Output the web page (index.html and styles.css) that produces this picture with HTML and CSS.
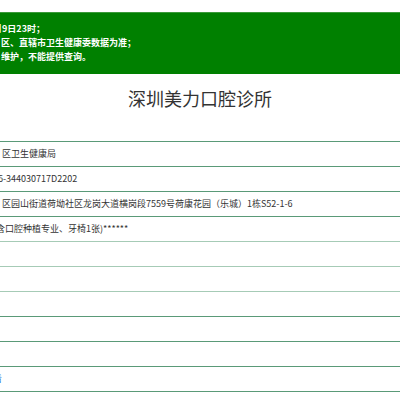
FILE: index.html
```html
<!DOCTYPE html>
<html lang="zh-CN">
<head>
<meta charset="utf-8">
<title>深圳美力口腔诊所</title>
<link rel="stylesheet" href="styles.css">
</head>
<body>
<div class="notice">
  <div class="line"><span class="cut1">月</span>9日23时；</div>
  <div class="line">区、直辖市卫生健康委数据为准；</div>
  <div class="line">维护，不能提供查询。</div>
</div>
<h1 class="title">深圳美力口腔诊所</h1>
<div class="table">
  <div class="row"><span class="val">区卫生健康局</span></div>
  <div class="row"><span class="val"><span class="cut2">6</span>-344030717D2202</span></div>
  <div class="row"><span class="val">区园山街道荷坳社区龙岗大道横岗段7559号荷康花园（乐城）1栋S52-1-6</span></div>
  <div class="row"><span class="val"><span class="cut3">含</span>口腔种植专业、牙椅1张)******</span></div>
  <div class="row light"></div>
  <div class="row light"></div>
  <div class="row light"></div>
  <div class="row"></div>
  <div class="row"></div>
  <div class="row"><span class="val"><span class="link">看</span></span></div>
  <div class="row"></div>
</div>
</body>
</html>
```
FILE: styles.css
```css
html, body {
  margin: 0;
  padding: 0;
  background: #fff;
  overflow: hidden;
}
body {
  font-family: "Noto Sans CJK SC", "Noto Sans", sans-serif;
  color: #333;
}
.notice {
  margin-top: 12px;
  background: #008000;
  border-top: 1px solid #3a9a3a;
  color: #fff;
  font-weight: bold;
  font-size: 9px;
  line-height: 14px;
  padding: 9px 0 10px 1px;
}
.line {
  white-space: nowrap;
}
.cut1 {
  display: inline-block;
  margin-left: -8px;
}
.title {
  margin: 9px 0 28px 0;
  font-size: 18px;
  font-weight: normal;
  line-height: 30px;
  text-align: center;
  color: #333;
}
.row {
  border-top: 1px solid #5a9a78;
  height: 24px;
  line-height: 24px;
  font-size: 9px;
  white-space: nowrap;
  overflow: hidden;
}
.row.light {
  border-top-color: #a6cbb6;
}
.val {
  display: inline-block;
  padding-left: 2px;
}
.cut2 {
  display: inline-block;
  margin-left: -4px;
}
.cut3 {
  display: inline-block;
  margin-left: -6px;
}
.link {
  display: inline-block;
  margin-left: -9px;
  color: #2a7ae2;
}
```
